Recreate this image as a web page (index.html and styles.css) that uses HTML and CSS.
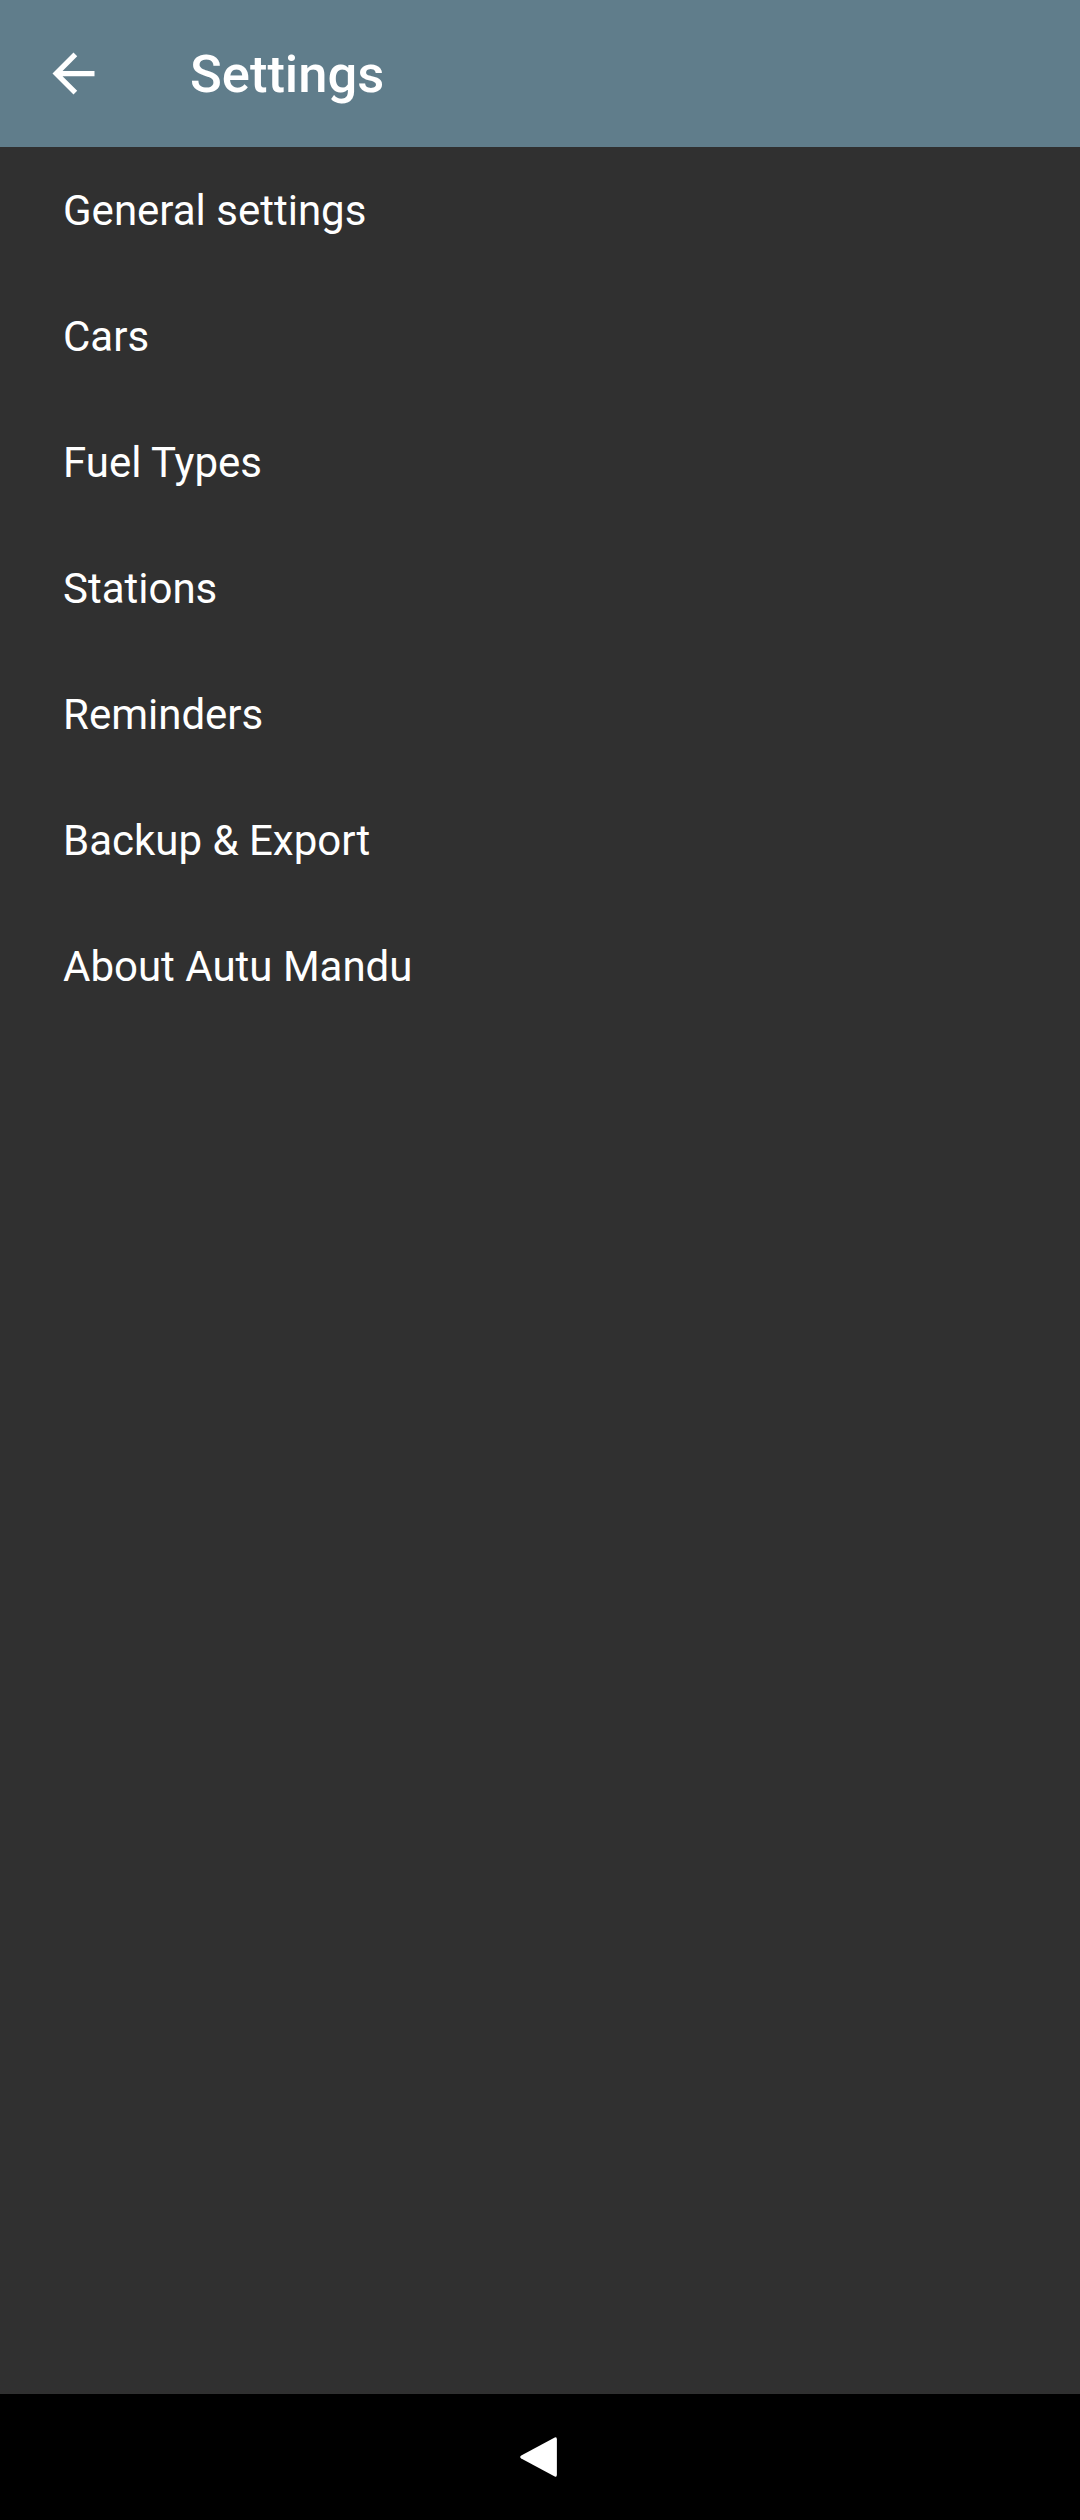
FILE: index.html
```html
<!DOCTYPE html>
<html lang="en">
<head>
<meta charset="utf-8">
<title>Settings</title>
<link rel="stylesheet" href="styles.css">
</head>
<body>
<div class="screen">
  <header class="appbar">
    <button class="back" aria-label="Back">
      <svg viewBox="0 0 24 24" width="63" height="63"><path fill="#fff" d="M20 11H7.83l5.59-5.59L12 4l-8 8 8 8 1.41-1.41L7.83 13H20v-2z"/></svg>
    </button>
    <h1 class="title">Settings</h1>
  </header>
  <main class="list">
    <div class="item">General settings</div>
    <div class="item">Cars</div>
    <div class="item">Fuel Types</div>
    <div class="item">Stations</div>
    <div class="item">Reminders</div>
    <div class="item">Backup &amp; Export</div>
    <div class="item">About Autu Mandu</div>
  </main>
  <nav class="navbar">
    <svg class="nav-back" viewBox="0 0 36 42" width="38" height="44"><path fill="#fff" d="M34 2.5 Q36 1.5 36 4 L36 38 Q36 40.5 34 39.5 L2 22.5 Q0 21 2 19.5 Z"/></svg>
  </nav>
</div>
</body>
</html>
```

FILE: styles.css
```css
html, body {
  margin: 0;
  padding: 0;
  background: #303030;
}
body {
  font-family: Roboto, "Noto Sans", "Liberation Sans", sans-serif;
  color: #fff;
}
.screen {
  width: 1080px;
  height: 2520px;
  display: flex;
  flex-direction: column;
  background: #303030;
}
.appbar {
  height: 147px;
  background: #607d8b;
  display: flex;
  align-items: center;
  flex-shrink: 0;
}
.back {
  width: 63px;
  height: 63px;
  margin-left: 42px;
  padding: 0;
  border: 0;
  background: none;
  display: flex;
}
.title {
  margin: 2px 0 0 85px;
  font-size: 52.5px;
  font-weight: 500;
  line-height: 1;
  color: #fff;
}
.list {
  flex: 1;
}
.item {
  height: 126px;
  display: flex;
  align-items: center;
  padding-left: 63px;
  font-size: 42px;
  color: #fff;
}
.navbar {
  height: 126px;
  background: #000;
  display: flex;
  align-items: center;
  justify-content: center;
  flex-shrink: 0;
}
.nav-back {
  display: block;
  margin-right: 5px;
}
```
